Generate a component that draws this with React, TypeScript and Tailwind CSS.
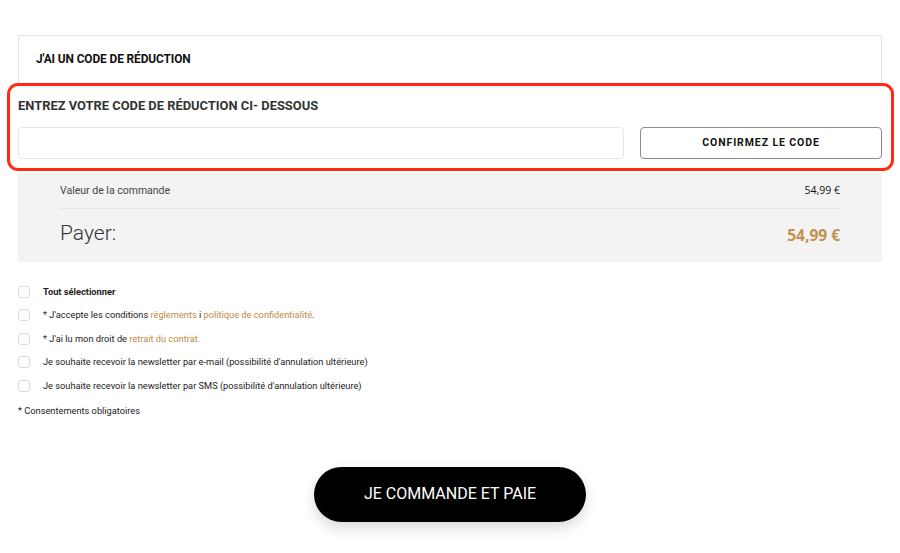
import React from "react";

const rows: { label: React.ReactNode; bold?: boolean }[] = [
  { label: "Tout sélectionner", bold: true },
  {
    label: (
      <>
        * J'accepte les conditions <span className="text-[#c08a45]">règlements</span> i{" "}
        <span className="text-[#c08a45]">politique de confidentialité</span>.
      </>
    ),
  },
  {
    label: (
      <>
        * J'ai lu mon droit de <span className="text-[#c08a45]">retrait du contrat.</span>
      </>
    ),
  },
  { label: "Je souhaite recevoir la newsletter par e-mail (possibilité d'annulation ultérieure)" },
  { label: "Je souhaite recevoir la newsletter par SMS (possibilité d'annulation ultérieure)" },
];

export default function App() {
  return (
    <div
      className="relative w-[900px] h-[553px] bg-white overflow-hidden text-[#222]"
      style={{ fontFamily: "Roboto, 'Liberation Sans', sans-serif" }}
    >
      <div className="px-[18px] pt-[35px]">
        {/* header box */}
        <div className="h-[50px] border-t border-l border-r border-[#e2e2e2] flex items-center pl-[17px] pb-[1px]">
          <span className="text-[11.9px] font-bold text-[#111] tracking-[-0.1px]">J'AI UN CODE DE RÉDUCTION</span>
        </div>

        {/* code section */}
        <div className="h-[88px] pt-[13px]">
          <div className="text-[12.9px] font-bold text-[#333] leading-[15px]">
            ENTREZ VOTRE CODE DE RÉDUCTION CI- DESSOUS
          </div>
          <div className="flex gap-[16px] mt-[14px]">
            <div className="w-[606px] h-[32px] border border-[#e6e6e6] rounded-[4px]" />
            <button className="flex-1 h-[32px] border border-[#8a8a8a] rounded-[4px] text-[10.5px] font-bold tracking-[0.9px] text-[#111]">
              CONFIRMEZ LE CODE
            </button>
          </div>
        </div>

        {/* summary */}
        <div className="bg-[#f3f3f3] h-[89px] px-[42px]">
          <div className="h-[36px] flex items-center justify-between border-b border-[#e4e4e4]">
            <span className="text-[10.5px] text-[#444]">Valeur de la commande</span>
            <span
              className="text-[10.5px] text-[#111]"
              style={{ fontFamily: "'Open Sans', sans-serif" }}
            >
              54,99 €
            </span>
          </div>
          <div className="h-[53px] flex items-center justify-between">
            <span className="text-[21px] font-light text-[#333] -mt-[4px]">Payer:</span>
            <span
              className="text-[15.5px] font-bold text-[#c4904e]"
              style={{ fontFamily: "'Open Sans', sans-serif" }}
            >
              54,99 €
            </span>
          </div>
        </div>

        {/* consents */}
        <div className="mt-[22px] flex flex-col gap-[8.5px]">
          {rows.map((r, i) => (
            <div key={i} className="flex items-center h-[15px]">
              <div className="w-[12px] h-[12px] border border-[#dcdcdc] rounded-[3px] bg-white" />
              <span className={`ml-[13px] text-[9.25px] text-[#222] ${r.bold ? "font-bold" : ""}`}>{r.label}</span>
            </div>
          ))}
        </div>
        <div className="mt-[11px] text-[9.25px] text-[#222]">* Consentements obligatoires</div>

        <div className="flex justify-center mt-[49px]">
          <button className="w-[272px] h-[55px] rounded-full bg-black text-white text-[16px] shadow-[0_6px_14px_rgba(0,0,0,0.15)]">
            JE COMMANDE ET PAIE
          </button>
        </div>
      </div>

      {/* annotation */}
      <div className="absolute left-[7px] top-[83px] w-[887px] h-[88px] border-[3px] border-[#ff2a10] rounded-[11px] pointer-events-none" />
    </div>
  );
}
